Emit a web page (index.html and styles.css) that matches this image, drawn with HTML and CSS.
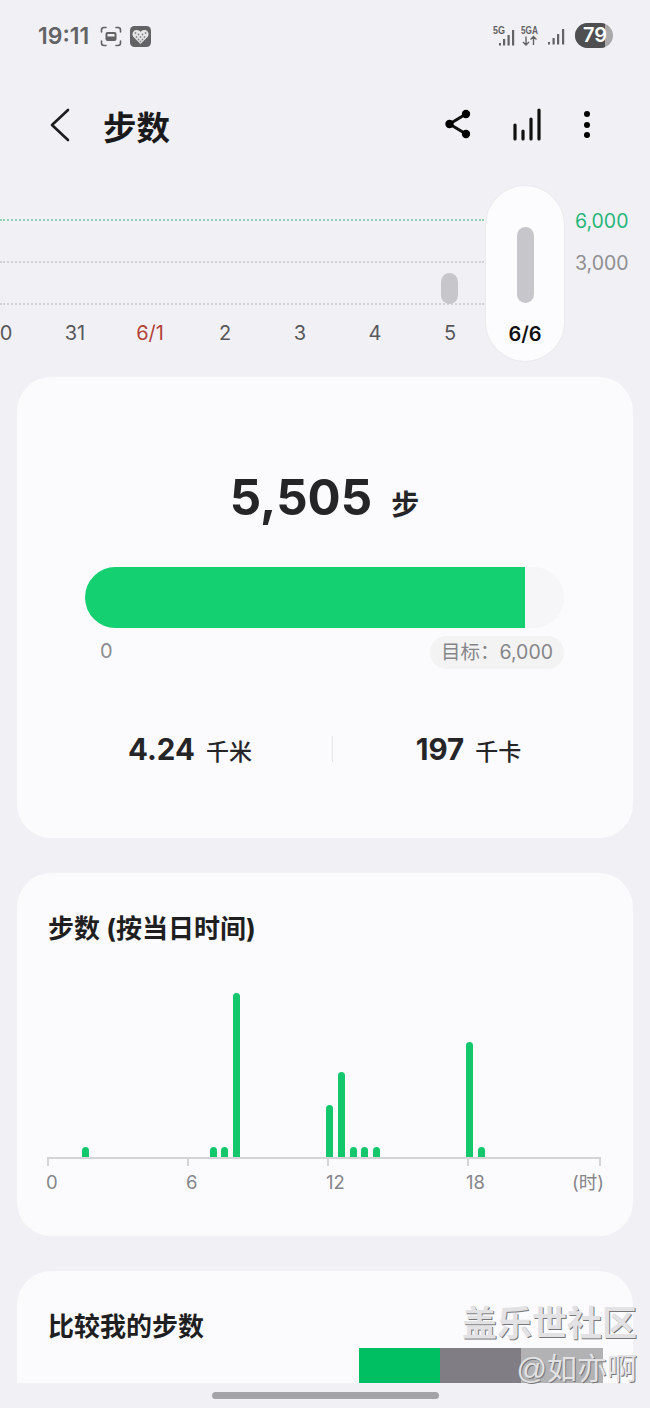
FILE: index.html
```html
<html lang="zh">
<head>
  <meta charset="UTF-8">
  <meta name="viewport" content="width=device-width, initial-scale=1.0">
  <title>步数</title>
  <link rel="stylesheet" href="styles.css">
</head>
<body>
  <div class="status">
    <div class="status-left">
      <span class="time">19:11</span>
      <svg class="status-icon" width="22" height="21" viewBox="0 0 22 21" fill="none" stroke="#636366" stroke-width="1.6" stroke-linecap="round">
        <path d="M1.5 6V4Q1.5 1.5 4 1.5H6M16 1.5H18Q20.5 1.5 20.5 4V6M20.5 15V17Q20.5 19.5 18 19.5H16M6 19.5H4Q1.5 19.5 1.5 17V15"/>
        <rect x="5.5" y="6" width="11" height="9" rx="2" fill="#636366" stroke="none"/>
        <rect x="7.5" y="8" width="7" height="2.5" fill="#f1f1f5" stroke="none"/>
      </svg>
      <svg class="status-icon" width="21" height="21" viewBox="0 0 21 21">
        <rect width="21" height="21" rx="4.5" fill="#636366"/>
        <path d="M10.5 18L3 10.500Q1.300 6.500 4.800 4.300Q8.500 3 10.500 5.800Q12.500 3 16.200 4.300Q19.700 6.500 18 10.500Z" fill="#e6e6e8"/>
        <g fill="#8a8a8e">
          <circle cx="5.500" cy="7" r=".9"/><circle cx="8.500" cy="8.500" r=".9"/><circle cx="12.500" cy="8.500" r=".9"/><circle cx="15.500" cy="7" r=".9"/>
          <circle cx="6.500" cy="11" r=".9"/><circle cx="10.500" cy="11" r=".9"/><circle cx="14.500" cy="11" r=".9"/>
          <circle cx="8.500" cy="13.500" r=".9"/><circle cx="12.500" cy="13.500" r=".9"/><circle cx="10.500" cy="15.500" r=".9"/>
        </g>
      </svg>
    </div>
    <div class="status-right">
      <svg class="net-one" width="24" height="22" viewBox="0 0 24 22">
        <text x="0" y="9" class="net-label" textLength="12" lengthAdjust="spacingAndGlyphs">5G</text>
        <g fill="#636366">
          <rect x="6" y="18" width="2" height="2.5"/><rect x="10" y="14" width="2.2" height="6.5"/><rect x="14.5" y="10" width="2.2" height="10.5"/><rect x="19" y="5" width="2.2" height="15.5"/>
        </g>
      </svg>
      <svg class="net-two" width="22" height="24" viewBox="0 0 22 24">
        <text x="0" y="10" class="net-label" textLength="17" lengthAdjust="spacingAndGlyphs">5GA</text>
        <path d="M5 12.5V21M2 18L5 21L8 18M12.5 21V12.5M9.5 15.500L12.500 12.500L15.500 15.500" fill="none" stroke="#636366" stroke-width="1.4"/>
      </svg>
      <svg class="net-three" width="19" height="18" viewBox="0 0 19 18">
        <g fill="#636366">
          <rect x="0" y="14" width="2" height="2.500"/><rect x="4.500" y="10" width="2.200" height="6.500"/><rect x="9" y="6" width="2.200" height="10.500"/><rect x="14" y="1" width="2.200" height="15.500"/>
        </g>
      </svg>
      <div class="battery"><span class="battery-level">79</span></div>
    </div>
  </div>

  <div class="topbar">
    <svg class="back" width="20" height="36" viewBox="0 0 20 36" fill="none" stroke="#1c1c1e" stroke-width="2.600" stroke-linecap="round" stroke-linejoin="round">
      <path d="M18 3L2 18L18 33"/>
    </svg>
    <h1 class="title">步数</h1>
    <div class="actions">
      <svg width="28" height="32" viewBox="0 0 28 32">
        <path d="M21 5L4.500 15L21 25" fill="none" stroke="#111" stroke-width="3"/>
        <circle cx="21" cy="5" r="4.200"/><circle cx="4.500" cy="15" r="4.200"/><circle cx="21" cy="25" r="4.200"/>
      </svg>
      <svg width="30" height="34" viewBox="0 0 30 34" fill="none" stroke="#111" stroke-width="3.200" stroke-linecap="round">
        <path d="M3 17V31M11 23V31M19 11V31M27 2V31"/>
      </svg>
      <svg width="8" height="30" viewBox="0 0 8 30">
        <circle cx="4" cy="4" r="3"/><circle cx="4" cy="15" r="3"/><circle cx="4" cy="25" r="3"/>
      </svg>
    </div>
  </div>

  <div class="trend">
    <div class="plot">
      <div class="gridline goal-line"></div>
      <div class="gridline"></div>
      <div class="gridline"></div>
      <div class="day-bar"></div>
    </div>
    <div class="scale">
      <span class="scale-goal">6,000</span>
      <span>3,000</span>
    </div>
    <div class="dates">
      <span>30</span>
      <span>31</span>
      <span class="month-start">6/1</span>
      <span>2</span>
      <span>3</span>
      <span>4</span>
      <span>5</span>
    </div>
    <div class="today">
      <div class="today-bar"></div>
      <span class="today-label">6/6</span>
    </div>
  </div>

  <div class="card summary">
    <div class="steps"><span class="steps-num">5,505</span><span class="steps-unit">步</span></div>
    <div class="progress"><div class="progress-fill"></div></div>
    <div class="progress-legend">
      <span class="legend-zero">0</span>
      <span class="goal-chip">目标：6,000</span>
    </div>
    <div class="stats">
      <div class="stat"><b>4.24</b><span>千米</span></div>
      <div class="stat-sep"></div>
      <div class="stat"><b>197</b><span>千卡</span></div>
    </div>
  </div>

  <div class="card hourly">
    <h2 class="card-title">步数 (按当日时间)</h2>
    <div class="bars">
      <i class="bar" style="grid-column:4;height:10px"></i>
      <i class="bar" style="grid-column:15;height:10px"></i>
      <i class="bar" style="grid-column:16;height:10px"></i>
      <i class="bar" style="grid-column:17;height:164px"></i>
      <i class="bar" style="grid-column:25;height:52px"></i>
      <i class="bar" style="grid-column:26;height:85px"></i>
      <i class="bar" style="grid-column:27;height:10px"></i>
      <i class="bar" style="grid-column:28;height:10px"></i>
      <i class="bar" style="grid-column:29;height:10px"></i>
      <i class="bar" style="grid-column:37;height:115px"></i>
      <i class="bar" style="grid-column:38;height:10px"></i>
    </div>
    <div class="axis">
      <div class="axis-seg">0</div>
      <div class="axis-seg">6</div>
      <div class="axis-seg">12</div>
      <div class="axis-seg axis-last"><span>18</span><span class="axis-unit">(时)</span></div>
    </div>
  </div>

  <div class="card compare">
    <h2 class="card-title">比较我的步数</h2>
    <div class="compare-bar">
      <div class="seg-me"></div>
      <div class="seg-mid"></div>
      <div class="seg-rest"></div>
    </div>
  </div>

  <div class="nav-pill"></div>

  <div class="watermark">
    <div class="wm-site">盖乐世社区</div>
    <div class="wm-user">@如亦啊</div>
  </div>
</body>
</html>
```

FILE: styles.css
```css
html, body {
  margin: 0;
  padding: 0;
}
body {
  position: relative;
  width: 650px;
  height: 1408px;
  overflow: hidden;
  background: #f1f1f5;
  font-family: Inter, "Noto Sans CJK SC", sans-serif;
  color: #252528;
}

/* status bar */
.status {
  height: 89px;
  box-sizing: border-box;
  padding: 23px 37px 0 38px;
  display: flex;
  justify-content: space-between;
  align-items: flex-start;
}
.status-left {
  display: flex;
  align-items: center;
  gap: 8px;
  height: 26px;
}
.time {
  font-size: 23px;
  font-weight: 600;
  color: #636366;
  margin-right: 3px;
}
.status-right {
  display: flex;
  align-items: flex-start;
}
.net-one {
  margin: 2px 4px 0 0;
}
.net-two {
  margin: 1px 5px 0 0;
}
.net-three {
  margin: 5px 8px 0 0;
}
.net-label {
  font-family: "Liberation Sans", sans-serif;
  font-size: 11px;
  font-weight: 700;
  fill: #636366;
}
.battery {
  width: 38px;
  height: 25px;
  border-radius: 13px;
  overflow: hidden;
  background: #a9a9ab;
  display: flex;
}
.battery-level {
  width: 30px;
  box-sizing: border-box;
  padding-left: 8px;
  background: #4f4f52;
  color: #fff;
  font-size: 20px;
  font-weight: 600;
  line-height: 25px;
  white-space: nowrap;
}

/* top bar */
.topbar {
  height: 72px;
  box-sizing: border-box;
  padding: 0 59px 0 50px;
  display: flex;
  align-items: center;
}
.back {
  margin-right: 33px;
}
.title {
  margin: 0;
  font-size: 33.500px;
  font-weight: 700;
  color: #1a1a1c;
}
.actions {
  margin-left: auto;
  display: flex;
  align-items: center;
  gap: 38px;
}
.actions svg:nth-child(2) {
  margin-left: 1px;
  margin-right: 3px;
}

/* week strip */
.trend {
  position: relative;
  height: 216px;
}
.plot {
  position: relative;
  width: 484px;
  padding-top: 58px;
}
.gridline {
  height: 42px;
  box-sizing: border-box;
  border-top: 2px dotted #d2d2d6;
}
.goal-line {
  border-top-color: #8fd3b4;
}
.day-bar {
  position: absolute;
  left: 441px;
  top: 112px;
  width: 17px;
  height: 31px;
  border-radius: 9px;
  background: #c7c7cb;
}
.scale {
  position: absolute;
  left: 575px;
  top: 39px;
  display: flex;
  flex-direction: column;
  font-size: 19.500px;
  line-height: 42px;
  color: #8e8e92;
}
.scale-goal {
  color: #27b67a;
}
.dates {
  margin-left: -37.500px;
  margin-top: -24px;
  display: grid;
  grid-template-columns: repeat(7, 75px);
  font-size: 20px;
  line-height: 24px;
  text-align: center;
  color: #58585c;
}
.month-start {
  color: #b3423a;
}
.today {
  position: absolute;
  left: 486px;
  top: 25px;
  width: 78px;
  height: 175px;
  box-sizing: border-box;
  border-radius: 39px;
  background: #fcfcfe;
  box-shadow: 0 0 0 1px #ebebef;
  display: flex;
  flex-direction: column;
  align-items: center;
  padding-top: 41px;
}
.today-bar {
  width: 17px;
  height: 76px;
  border-radius: 9px;
  background: #c7c7cb;
}
.today-label {
  margin-top: 19px;
  font-size: 20px;
  line-height: 24px;
  font-weight: 600;
  color: #111;
}

/* cards */
.card {
  margin: 0 17px 35px;
  background: #fbfbfe;
  border-radius: 34px;
  box-sizing: border-box;
}
.card-title {
  margin: 0;
  font-size: 26px;
  font-weight: 700;
  color: #1f1f22;
}
.summary {
  height: 461px;
  padding: 88px 69px 0 68px;
}
.steps {
  display: flex;
  justify-content: center;
  align-items: baseline;
  height: 64px;
  line-height: 64px;
}
.steps-num {
  font-size: 49.200px;
  font-weight: 700;
}
.steps-unit {
  margin-left: 19px;
  font-size: 28px;
  font-weight: 700;
}
.progress {
  margin-top: 38px;
  height: 61px;
  border-radius: 31px;
  background: #f6f6f9;
  overflow: hidden;
}
.progress-fill {
  width: 440px;
  height: 100%;
  background: #14d071;
}
.progress-legend {
  margin-top: 8px;
  display: flex;
  justify-content: space-between;
  align-items: flex-start;
}
.legend-zero {
  margin-left: 15px;
  font-size: 20px;
  line-height: 30px;
  color: #8b8b8f;
}
.goal-chip {
  height: 33px;
  line-height: 33px;
  padding: 0 11px;
  border-radius: 17px;
  background: #f3f3f3;
  font-size: 19.500px;
  color: #86868a;
}
.stats {
  margin: 62px 0 0 -37px;
  display: grid;
  grid-template-columns: 284px 1px 271px;
  align-items: center;
}
.stat {
  display: flex;
  justify-content: center;
  align-items: baseline;
  gap: 11px;
  color: #252528;
}
.stat b {
  font-size: 29.500px;
  font-weight: 700;
}
.stat span {
  font-size: 23px;
  font-weight: 500;
}
.stat-sep {
  height: 26px;
  background: #e6e6e8;
}
.hourly {
  height: 363px;
  padding: 35px 31px 0;
}
.bars {
  margin: 42px 0 0 -3.700px;
  height: 170px;
  display: grid;
  grid-template-columns: repeat(48, 11.660px);
  align-items: end;
  justify-items: center;
}
.bar {
  grid-row: 1;
  width: 7px;
  border-radius: 4px 4px 0 0;
  background: #14c76c;
}
.axis {
  display: flex;
  width: 554px;
  margin-left: -1px;
  box-sizing: border-box;
  border-top: 2px solid #d4d4d6;
  font-size: 18.500px;
  line-height: 26px;
  color: #85858a;
  text-indent: -1px;
}
.axis-seg {
  width: 140px;
  padding-top: 10px;
  background: linear-gradient(#d4d4d6, #d4d4d6) left top / 2px 7px no-repeat;
}
.axis-last {
  flex: 1;
  display: flex;
  justify-content: space-between;
  background:
    linear-gradient(#d4d4d6, #d4d4d6) left top / 2px 7px no-repeat,
    linear-gradient(#d4d4d6, #d4d4d6) right top / 2px 7px no-repeat;
}
.axis-unit {
  margin-right: -3px;
}
.compare {
  position: relative;
  height: 112px;
  margin-bottom: 9px;
  border-radius: 34px 34px 0 0;
  padding: 35px 31px 0;
  overflow: hidden;
}
.compare-bar {
  position: absolute;
  left: 342px;
  bottom: 0;
  display: flex;
  height: 35px;
}
.seg-me {
  width: 81px;
  background: #00bf63;
}
.seg-mid {
  width: 81px;
  background: #807e84;
}
.seg-rest {
  width: 82px;
  background: #b2b2b4;
}
.nav-pill {
  width: 227px;
  height: 7px;
  margin: 0 auto;
  border-radius: 4px;
  background: #a4a4a8;
}

/* forum watermark, sits over everything */
.watermark {
  position: absolute;
  right: 13px;
  top: 1302px;
  text-align: right;
  font-family: "Liberation Sans", "Noto Sans CJK SC", sans-serif;
  color: #e2e2e4;
  text-shadow: 1px 1px 0 #77777a;
}
.wm-site {
  font-size: 35px;
  line-height: 44px;
  font-weight: 700;
}
.wm-user {
  margin-top: 3px;
  font-size: 30px;
  line-height: 40px;
}
```
